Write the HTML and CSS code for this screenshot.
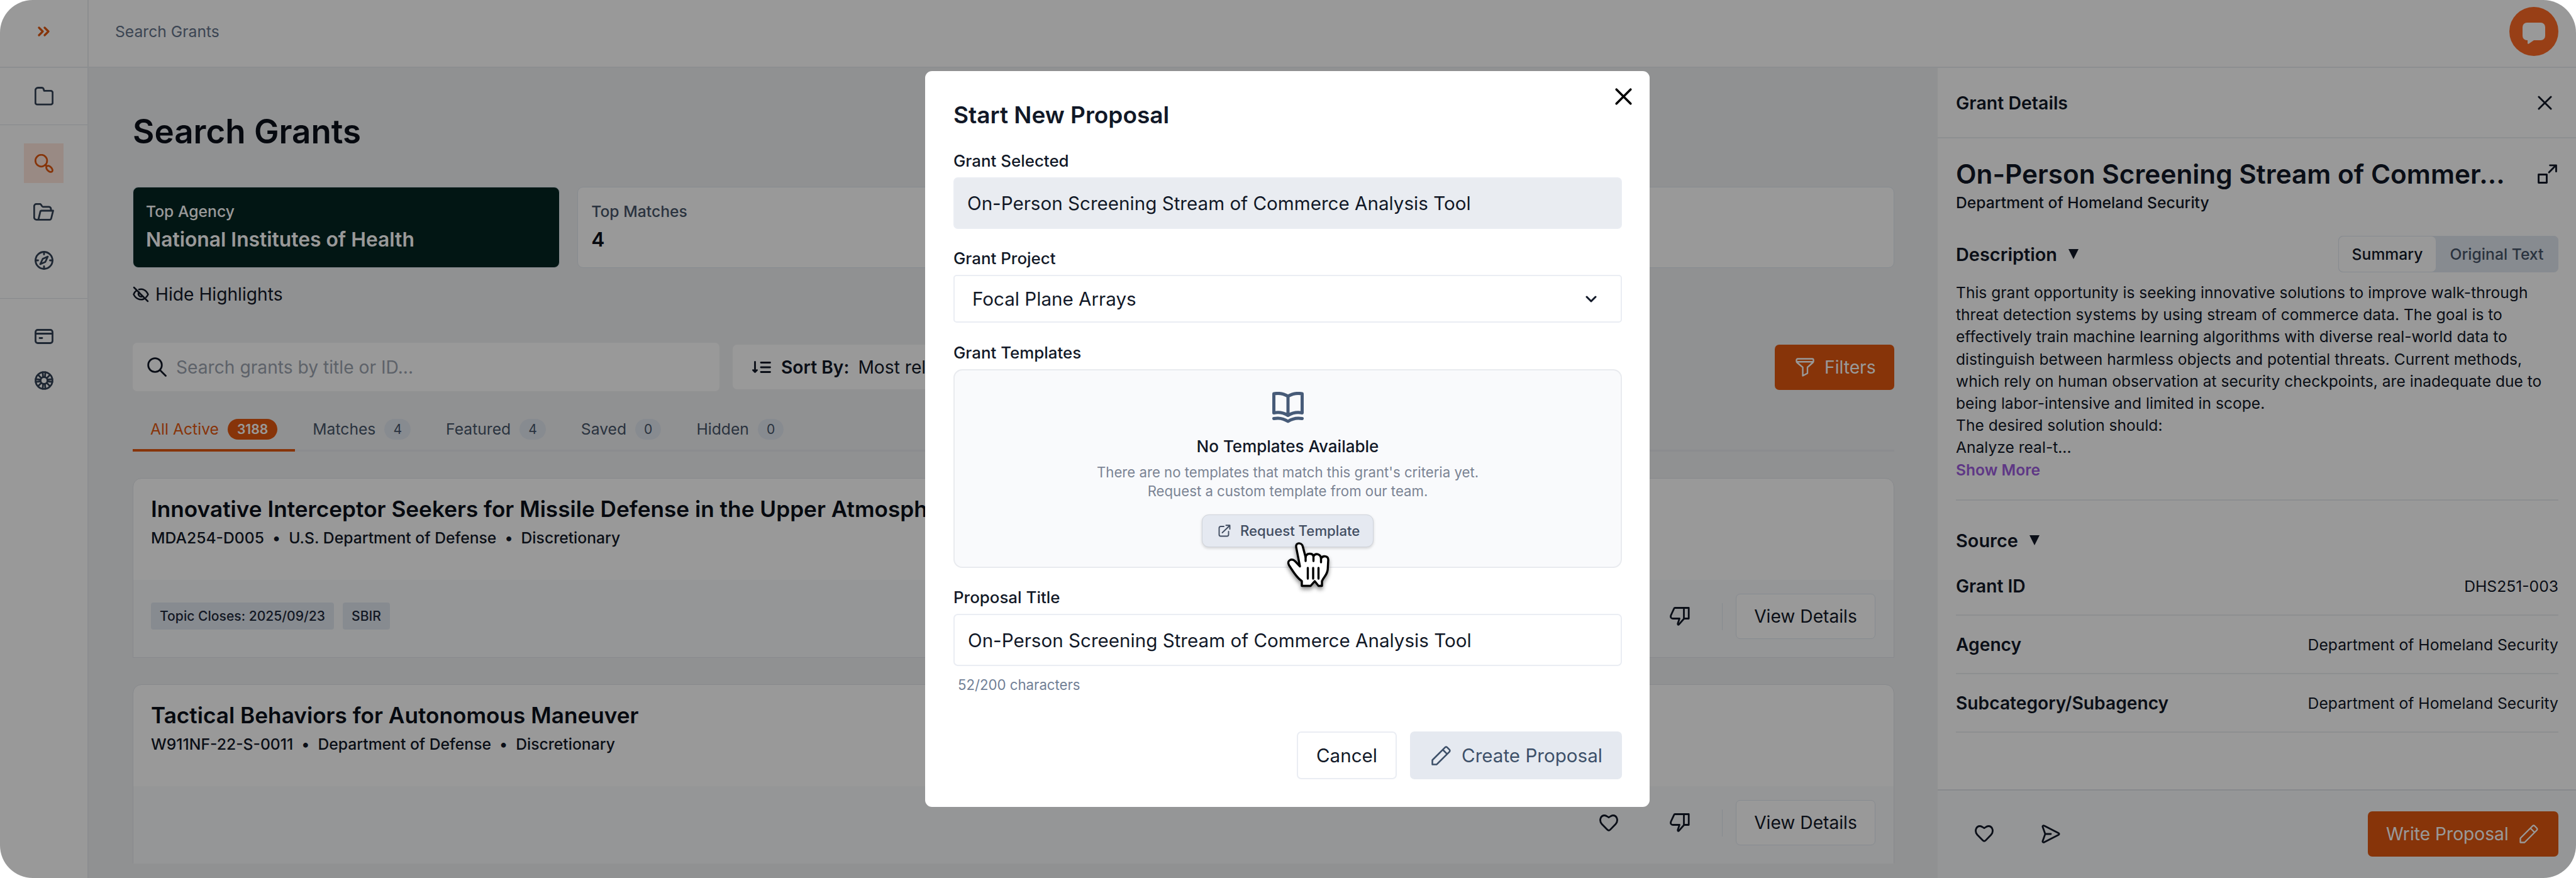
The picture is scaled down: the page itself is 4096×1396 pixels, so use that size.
FILE: index.html
```html
<!DOCTYPE html>
<html lang="en">
<head>
    <meta charset="UTF-8">
    <meta name="viewport" content="width=device-width, initial-scale=1.0">
    <title>Search Grants</title>
    <link rel="stylesheet" href="styles.css">
</head>
<body>

<svg class="sprite" aria-hidden="true">
    <symbol id="i-heart" viewBox="0 0 30 27"><path d="M15 25.3c-1 0-1.700-.5-2.400-1.200L4 15.200C-.6 10 1.600 1.500 8.400 1.500c2.600 0 4.600 2.200 6.600 3.100 2-.9 4-3.100 6.600-3.100 6.800 0 9 8.500 4.400 13.700l-8.600 8.900c-.7.700-1.400 1.200-2.400 1.200z"/></symbol>
    <symbol id="i-thumb" viewBox="0 0 32 30"><path d="M30.200 1.500H8.300c-.8 0-1.200.4-1.500 1.100L1.800 13.500c-.8 3 .4 5 3 5h10.700L12.800 26.500c-.2 2 .8 2.200 2 1.200l8-9.200h7.400zM22.500 1.500v17"/></symbol>
    <symbol id="i-close" viewBox="0 0 24 24"><path d="M2 2l20 20M22 2L2 22"/></symbol>
    <symbol id="i-pencil" viewBox="0 0 30 30"><path d="M1.500 28.500v-6.700L21 2.300c1-1 2.300-1 3.300 0l3.400 3.400c1 1 1 2.300 0 3.300L8.200 28.500zM17.500 5.800l6.700 6.700"/></symbol>
</svg>

<div class="app">
    <aside class="sidebar">
        <div class="sidebar-top">
            <svg class="chevrons" viewBox="0 0 20 16"><path d="M2 2l6 6-6 6M11 2l6 6-6 6"/></svg>
        </div>
        <div class="nav-group nav-projects">
            <a class="nav-item"><svg viewBox="0 0 30 30"><path d="M1.300 5.500A4 4 0 0 1 5.300 1.500h6c1.500 0 2.500.6 3 2l.8 2.800h10.600a3 3 0 0 1 3 3v15.900a3 3 0 0 1-3 3H4.300a3 3 0 0 1-3-3z"/></svg></a>
        </div>
        <div class="nav-group nav-grants">
            <a class="nav-item active"><svg viewBox="0 0 30 30"><circle cx="10.600" cy="10.500" r="9.300"/><ellipse cx="23.500" cy="23.500" rx="6" ry="3.600" transform="rotate(45 23.500 23.500)"/><path d="M17 17l2.500 2.500"/></svg></a>
            <a class="nav-item"><svg class="wide" viewBox="0 0 33 28"><path d="M8 26.300H5a3.700 3.700 0 0 1-3.700-3.700V5A3.700 3.700 0 0 1 5 1.300h5.500c2.500 0 2.500 4.500 4.500 4.500h9.500a3.500 3.500 0 0 1 3.500 3.500v2.700M8 26.300l3-12.500c.3-1.200 1-1.800 2-1.800h18.500l-3 12c-.4 1.600-1.200 2.300-2.500 2.300z"/></svg></a>
            <a class="nav-item"><svg viewBox="0 0 30 30"><circle cx="15" cy="15" r="13.500"/><path d="M15 1.500v4M15 24.500v4M1.500 15h4M24.500 15h4M21 9l-8 3.500L9 21l8-3.500z"/></svg></a>
        </div>
        <div class="nav-group nav-account">
            <a class="nav-item"><svg viewBox="0 0 30 30"><rect x="1.500" y="4.500" width="27" height="21" rx="3.500"/><path d="M1.500 10.500h27M8 17.500h4"/></svg></a>
            <a class="nav-item"><svg viewBox="0 0 30 30"><circle cx="15" cy="15" r="13.400"/><circle cx="15" cy="15" r="5.500"/><path d="M12.800 1.800l.7 7M17.200 1.800l-.7 7M12.800 28.200l.7-7M17.200 28.200l-.7-7M1.800 12.800l7 .7M1.800 17.200l7-.7M28.200 12.800l-7 .7M28.200 17.200l-7-.7M5.500 6l5 5M24.500 6l-5 5M5.500 24l5-5M24.500 24l-5-5"/></svg></a>
        </div>
    </aside>

    <div class="workspace">
        <header class="topbar">
            <span>Search Grants</span>
            <div class="chat-button">
                <svg viewBox="0 0 36 34"><path d="M7 0h22a7 7 0 0 1 7 7v14a7 7 0 0 1-7 7H18l-8 5.500c-1.200.7-2 .2-2-1V28H7a7 7 0 0 1-7-7V7a7 7 0 0 1 7-7z"/></svg>
            </div>
        </header>

        <div class="columns">
            <main class="content">
                <h1>Search Grants</h1>
                <div class="stats">
                    <div class="stat featured"><span>Top Agency</span><strong>National Institutes of Health</strong></div>
                    <div class="stat"><span>Top Matches</span><strong>4</strong></div>
                    <div class="stat"></div>
                    <div class="stat"></div>
                </div>
                <div class="highlights">
                    <svg viewBox="0 0 26 26"><path d="M2 2l22 22M10 5.200c6-1.600 11.500 1.300 14.500 7.800-.8 1.900-1.900 3.500-3.200 4.700M6.500 6.500C4.300 8 2.600 10.200 1.500 13c3.200 7 9.800 9.800 16 7.500M10.300 9.700c-3.300 3.600 1.200 9 5.300 6.200"/></svg>
                    <span>Hide Highlights</span>
                </div>
                <div class="toolbar">
                    <div class="search">
                        <svg viewBox="0 0 31 31"><circle cx="12.500" cy="12.500" r="10.800"/><path d="M20.500 20.500l9 9"/></svg>
                        <span>Search grants by title or ID...</span>
                    </div>
                    <div class="sort">
                        <svg viewBox="0 0 30 20"><path d="M4.500 1.500v16M1.500 14.500l3 3 3-3M14 2.500h14.500M14 10h14.500M14 17.500h14.500"/></svg>
                        <strong>Sort By:</strong><span>Most relevant</span>
                    </div>
                    <div class="filters">
                        <svg viewBox="0 0 30 30"><path d="M1.500 3.500a2 2 0 0 1 2-2h23a2 2 0 0 1 2 2v1.700c0 1-.3 1.700-1 2.300L19 15v9.500L11.500 28.500V15L2.500 7.500c-.7-.6-1-1.300-1-2.300zM2 6.300h26"/></svg>
                        <span>Filters</span>
                    </div>
                </div>
                <nav class="tabs">
                    <div class="tab active">All Active<b>3188</b></div>
                    <div class="tab">Matches<b>4</b></div>
                    <div class="tab">Featured<b>4</b></div>
                    <div class="tab">Saved<b>0</b></div>
                    <div class="tab">Hidden<b>0</b></div>
                </nav>
                <article class="grant">
                    <div class="grant-head">
                        <h2>Innovative Interceptor Seekers for Missile Defense in the Upper Atmosphere</h2>
                        <p><span>MDA254-D005</span><i>•</i><span>U.S. Department of Defense</span><i>•</i><span>Discretionary</span></p>
                    </div>
                    <div class="grant-foot">
                        <span class="tag">Topic Closes: 2025/09/23</span>
                        <span class="tag">SBIR</span>
                        <div class="actions">
                            <svg class="heart"><use href="#i-heart"/></svg>
                            <svg class="thumb"><use href="#i-thumb"/></svg>
                            <span class="separator"></span>
                            <div class="view">View Details</div>
                        </div>
                    </div>
                </article>
                <article class="grant">
                    <div class="grant-head">
                        <h2>Tactical Behaviors for Autonomous Maneuver</h2>
                        <p><span>W911NF-22-S-0011</span><i>•</i><span>Department of Defense</span><i>•</i><span>Discretionary</span></p>
                    </div>
                    <div class="grant-foot">
                        <div class="actions">
                            <svg class="heart"><use href="#i-heart"/></svg>
                            <svg class="thumb"><use href="#i-thumb"/></svg>
                            <span class="separator"></span>
                            <div class="view">View Details</div>
                        </div>
                    </div>
                </article>
            </main>

            <aside class="details">
                <div class="details-head">
                    <span>Grant Details</span>
                    <svg><use href="#i-close"/></svg>
                </div>
                <div class="details-body">
                    <div class="details-title">
                        <h2>On-Person Screening Stream of Commer...</h2>
                        <svg viewBox="0 0 30 30"><path d="M1.500 16h12.500v12.500h-12.500zM17.500 12.500L28 2M19 1.800h9.500v9.500"/></svg>
                    </div>
                    <p class="agency">Department of Homeland Security</p>
                    <div class="section-head description-head">
                        <h3>Description</h3><span class="triangle"></span>
                        <div class="toggle"><span class="on">Summary</span><span>Original Text</span></div>
                    </div>
                    <div class="description">
                        This grant opportunity is seeking innovative solutions to improve walk-through<br>
                        threat detection systems by using stream of commerce data. The goal is to<br>
                        effectively train machine learning algorithms with diverse real-world data to<br>
                        distinguish between harmless objects and potential threats. Current methods,<br>
                        which rely on human observation at security checkpoints, are inadequate due to<br>
                        being labor-intensive and limited in scope.<br>
                        The desired solution should:<br>
                        Analyze real-t...<br>
                        <a>Show More</a>
                    </div>
                    <div class="section-head source-head"><h3>Source</h3><span class="triangle"></span></div>
                    <dl>
                        <div><dt>Grant ID</dt><dd>DHS251-003</dd></div>
                        <div><dt>Agency</dt><dd>Department of Homeland Security</dd></div>
                        <div><dt>Subcategory/Subagency</dt><dd>Department of Homeland Security</dd></div>
                    </dl>
                </div>
                <div class="details-foot">
                    <svg class="heart"><use href="#i-heart"/></svg>
                    <svg class="send" viewBox="0 0 30 30"><path d="M2 3.700c-.5-1.800 1-2.600 2.600-1.700L27 13.400c1.600.9 1.600 2.300 0 3.200L4.600 28c-1.600.9-3.100.1-2.600-1.700L6 15zM6 15h9"/></svg>
                    <div class="write">Write Proposal<svg><use href="#i-pencil"/></svg></div>
                </div>
            </aside>
        </div>
    </div>

    <div class="overlay">
        <div class="modal">
            <svg class="modal-close"><use href="#i-close"/></svg>
            <h2>Start New Proposal</h2>
            <label>Grant Selected</label>
            <div class="field selected">On-Person Screening Stream of Commerce Analysis Tool</div>
            <label>Grant Project</label>
            <div class="field project">
                <span>Focal Plane Arrays</span>
                <svg viewBox="0 0 18 11"><path d="M2 2l7 7 7-7"/></svg>
            </div>
            <label>Grant Templates</label>
            <div class="templates">
                <svg class="book" viewBox="0 0 50 50"><path d="M2.500 3v30.500c8-1.800 15-.5 22.500 4 7.500-4.500 14.500-5.800 22.500-4V3C39.500 1.500 32.500 2.500 25 7 17.500 2.500 10.500 1.500 2.500 3zM25 7v30M2.500 42.500c8-1.500 15-.5 22.500 4.500 7.500-5 14.500-6 22.500-4.500"/></svg>
                <h3>No Templates Available</h3>
                <p>There are no templates that match this grant's criteria yet.<br>Request a custom template from our team.</p>
                <div class="request">
                    <svg viewBox="0 0 20 20"><path d="M9 3H4a2.500 2.500 0 0 0-2.500 2.500V16A2.500 2.500 0 0 0 4 18.500h10a2.500 2.500 0 0 0 2.500-2.500v-5M6.500 13L18.500 1.500M12.500 1.200h6v6"/></svg>
                    <span>Request Template</span>
                </div>
            </div>
            <label>Proposal Title</label>
            <div class="field title-field">On-Person Screening Stream of Commerce Analysis Tool</div>
            <p class="counter">52/200 characters</p>
            <div class="modal-actions">
                <div class="cancel">Cancel</div>
                <div class="create"><svg><use href="#i-pencil"/></svg>Create Proposal</div>
            </div>
        </div>
    </div>

    <svg class="cursor" viewBox="0 0 70 75"><path class="hand" d="M15 8C13.500 0 24 0 25.500 7L30 24c1-7 11-7 12.500-1.500C46 16.500 54 19 54.500 26c3-5.500 11.500-4 11.500 2L65.200 43C64.500 52 59 55 56 62v7.500h-5.500L44.500 62l-6.500 7.500H24V62C14 55 10 46 3.500 36.500-.5 29 8 25 13.500 30.500l7.500 8z"/><path d="M30 24v6M42.500 22.500V30M54.500 26v6M33.500 41v17M42 41v17M50.500 41v17"/></svg>
</div>

</body>
</html>
```
FILE: styles.css
```css
* {
    box-sizing: border-box;
}
body {
    margin: 0;
    background: #ffffff;
    font-family: Inter, "Liberation Sans", sans-serif;
    font-size: 24.7px;
    color: #111827;
}
h1, h2, h3, p, dl, dd {
    margin: 0;
}
svg {
    display: block;
    flex: none;
    fill: none;
    stroke: currentColor;
    stroke-width: 2.8;
    stroke-linecap: round;
    stroke-linejoin: round;
}
.sprite {
    display: none;
}
.app {
    position: relative;
    display: flex;
    width: 4096px;
    height: 1396px;
    overflow: hidden;
    border-radius: 52px;
    background: #ffffff;
}

/* Sidebar */
.sidebar {
    width: 141px;
    border-right: 2px solid #eaedf1;
    color: #334155;
}
.sidebar-top {
    display: flex;
    align-items: center;
    justify-content: center;
    height: 108px;
    padding-bottom: 7px;
    border-bottom: 2px solid #eaedf1;
}
.chevrons {
    width: 20px;
    height: 16px;
    color: #e0570f;
    stroke-width: 3.2;
}
.nav-group {
    display: flex;
    flex-direction: column;
    align-items: center;
}
.nav-projects {
    height: 91px;
    padding-top: 13px;
    border-bottom: 1px solid #e2e5ea;
}
.nav-grants {
    height: 276px;
    padding-top: 29px;
    gap: 14px;
    border-bottom: 1px solid #e2e5ea;
}
.nav-account {
    padding-top: 28px;
    gap: 7px;
}
.nav-item {
    display: flex;
    align-items: center;
    justify-content: center;
    width: 63px;
    height: 63px;
}
.nav-item svg {
    width: 30px;
    height: 30px;
}
.nav-item .wide {
    width: 33px;
    height: 28px;
}
.nav-item.active {
    background: #ffe6dc;
    color: #e0570f;
}

/* Top bar */
.workspace {
    flex: 1;
    display: flex;
    flex-direction: column;
}
.topbar {
    display: flex;
    align-items: center;
    justify-content: space-between;
    height: 108px;
    padding: 0 28px 6px 42px;
    border-bottom: 2px solid #eaedf1;
    color: #64748b;
}
.chat-button {
    display: flex;
    align-items: center;
    justify-content: center;
    width: 78px;
    height: 78px;
    padding-top: 6px;
    border-radius: 50%;
    background: #fe6926;
}
.chat-button svg {
    width: 36px;
    height: 34px;
    fill: #ffffff;
    stroke: none;
}
.columns {
    flex: 1;
    display: flex;
}

/* Search page */
.content {
    flex: 1;
    padding: 69px 69px 0 70px;
    background: #f1f2f4;
}
.content h1 {
    font-size: 52.9px;
    font-weight: 600;
    line-height: 64px;
    color: #0b0f19;
}
.stats {
    display: grid;
    grid-template-columns: repeat(4, 1fr);
    gap: 28px;
    margin-top: 56px;
}
.stat {
    display: flex;
    flex-direction: column;
    height: 129px;
    padding: 23px 21px;
    border: 1px solid #e2e8f0;
    border-radius: 9px;
    background: #ffffff;
    color: #475569;
}
.stat span {
    line-height: 30px;
    font-weight: 500;
}
.stat strong {
    margin-top: 11px;
    font-size: 31.8px;
    font-weight: 600;
    line-height: 38px;
    color: #0b0f19;
}
.stat.featured {
    padding-left: 20px;
}
.stat.featured,
.stat.featured strong {
    background: #042522;
    color: #ffffff;
}
.highlights {
    display: flex;
    align-items: center;
    gap: 10px;
    height: 34px;
    margin-top: 25px;
    font-size: 28.2px;
}
.highlights svg {
    width: 26px;
    height: 26px;
    stroke-width: 2.5;
}
.toolbar {
    display: flex;
    align-items: center;
    height: 77px;
    margin-top: 60px;
    font-size: 28.2px;
}
.search,
.sort,
.filters {
    display: flex;
    align-items: center;
    background: #ffffff;
    border-radius: 7px;
}
.search {
    width: 933px;
    height: 77px;
    padding-left: 23px;
    gap: 15px;
    color: #9ca3af;
}
.search svg {
    width: 31px;
    height: 31px;
    color: #111827;
}
.sort {
    width: 560px;
    height: 71px;
    margin-left: 21px;
    padding-left: 31px;
}
.sort svg {
    width: 30px;
    height: 20px;
    margin-right: 16px;
}
.sort strong {
    margin-right: 14px;
    font-weight: 600;
}
.filters {
    width: 190px;
    height: 72px;
    margin-left: auto;
    padding-left: 33px;
    gap: 16px;
    background: #e1570f;
    color: #ffffff;
}
.filters svg {
    width: 30px;
    height: 30px;
    stroke-width: 2.4;
}
.tabs {
    display: flex;
    height: 71px;
    margin-top: 25px;
    box-shadow: inset 0 -3px #e8eaee;
    color: #475569;
}
.tab {
    display: flex;
    align-items: center;
    gap: 14px;
    padding: 3px 28px 0;
    border-bottom: 4px solid transparent;
}
.tab b {
    height: 33px;
    padding: 0 14px;
    border-radius: 17px;
    background: #e2e8f0;
    font-size: 21.1px;
    font-weight: 400;
    line-height: 33px;
}
.tab.active {
    border-color: #e1570f;
    color: #e1570f;
}
.tab.active b {
    padding: 0 15px;
    background: #e1570f;
    color: #ffffff;
    font-weight: 600;
}
.grant {
    height: 286px;
    margin-top: 42px;
    border: 1px solid #e2e5ea;
    border-radius: 14px 14px 0 0;
    background: #ffffff;
}
.grant + .grant {
    height: 285px;
}
.grant-head {
    height: 161px;
    padding: 27px 28px 0;
}
.grant h2 {
    overflow: hidden;
    font-size: 35.2px;
    font-weight: 600;
    line-height: 42px;
    white-space: nowrap;
    color: #0b0f19;
}
.grant p {
    display: flex;
    gap: 13px;
    margin-top: 9px;
    font-weight: 500;
    line-height: 32px;
}
.grant i {
    font-style: normal;
}
.grant-foot {
    display: flex;
    height: 123px;
    padding: 36px 29px 0 28px;
    gap: 14px;
    background: #f8fafc;
}
.tag {
    height: 43px;
    padding: 0 14px;
    border-radius: 4px;
    background: #e2e8f0;
    font-size: 21.1px;
    font-weight: 500;
    line-height: 43px;
    color: #1e293b;
}
.actions {
    display: flex;
    align-items: center;
    height: 72px;
    margin: -14px 0 0 auto;
}
.heart {
    width: 30px;
    height: 27px;
}
.thumb {
    width: 32px;
    height: 30px;
    margin-left: 82px;
}
.separator {
    width: 1px;
    height: 43px;
    margin: 0 21px 0 51px;
    background: #e2e8f0;
}
.view {
    width: 222px;
    height: 72px;
    border: 1px solid #e2e8f0;
    border-radius: 7px;
    background: #ffffff;
    font-size: 28.2px;
    line-height: 70px;
    text-align: center;
}

/* Grant details */
.details {
    display: flex;
    flex-direction: column;
    width: 1015px;
}
.details-head {
    display: flex;
    align-items: center;
    justify-content: space-between;
    height: 112px;
    padding: 1px 38px 0 29px;
    border-bottom: 2px solid #eceef1;
    font-size: 28.5px;
    font-weight: 600;
}
.details-head svg {
    width: 23px;
    height: 23px;
    stroke-width: 3;
}
.details-body {
    flex: 1;
    padding: 30px 28px 0 29px;
}
.details-title {
    display: flex;
    align-items: center;
    justify-content: space-between;
    height: 52px;
    padding-right: 2px;
}
.details-title h2 {
    font-size: 42.3px;
    font-weight: 600;
}
.details-title svg {
    width: 31px;
    height: 31px;
}
.agency {
    margin-top: 4px;
    font-weight: 500;
    line-height: 32px;
}
.section-head {
    display: flex;
    align-items: center;
}
.section-head h3 {
    font-size: 28.9px;
    font-weight: 600;
}
.triangle {
    margin-left: 18px;
    border: 8.5px solid transparent;
    border-top: 16px solid #111827;
    border-bottom: 0;
}
.description-head {
    height: 58px;
    margin-top: 37px;
}
.toggle {
    display: flex;
    width: 350px;
    height: 58px;
    margin-left: auto;
    border: 1px solid #e2e8f0;
    border-radius: 7px;
    background: #e2e8f0;
    font-weight: 500;
    line-height: 56px;
    text-align: center;
    color: #475569;
}
.toggle span {
    flex: 1;
}
.toggle .on {
    flex: 0 0 154px;
    border-radius: 7px;
    background: #ffffff;
    color: #111827;
}
.description {
    height: 348px;
    margin-top: 15px;
    font-size: 24.6px;
    line-height: 35.2px;
    white-space: nowrap;
    border-bottom: 2px solid #eaedf1;
}
.description a {
    font-weight: 600;
    color: #9d5cde;
}
.source-head {
    height: 36px;
    margin-top: 45px;
}
.details dl > div {
    display: flex;
    align-items: center;
    justify-content: space-between;
    height: 93px;
    border-bottom: 2px solid #eceef1;
}
.details dl > div:first-child {
    height: 102px;
    padding-top: 9px;
}
.details dt {
    font-size: 28.2px;
    font-weight: 600;
}
.details-foot {
    display: flex;
    align-items: center;
    height: 141px;
    padding: 0 28px 2px 59px;
    border-top: 2px solid #e2e5ea;
    background: #f8fafc;
}
.send {
    width: 30px;
    height: 30px;
    margin-left: 76px;
}
.write {
    display: flex;
    align-items: center;
    justify-content: space-between;
    width: 303px;
    height: 72px;
    margin-left: auto;
    padding: 0 32px 0 29px;
    border-radius: 7px;
    background: #e1570f;
    color: #ffffff;
    font-size: 28.2px;
}
.write svg {
    width: 30px;
    height: 30px;
    stroke-width: 2.3;
}

/* Proposal dialog */
.overlay {
    position: absolute;
    inset: 0;
    display: flex;
    justify-content: center;
    align-items: center;
    background: rgba(0, 0, 0, 0.4);
}
.modal {
    position: relative;
    width: 1152px;
    height: 1170px;
    padding: 45px 44px 0 45px;
    margin-right: 2px;
    border-radius: 11px;
    background: #ffffff;
}
.modal-close {
    position: absolute;
    top: 27px;
    right: 28px;
    width: 27px;
    height: 27px;
    color: #000000;
    stroke-width: 3.2;
}
.modal h2 {
    font-size: 37px;
    font-weight: 600;
    line-height: 50px;
}
.modal label {
    display: block;
    height: 52px;
    font-size: 25.9px;
    font-weight: 500;
    line-height: 44px;
}
.modal h2 + label {
    margin-top: 26px;
    height: 48px;
}
.field {
    display: flex;
    align-items: center;
    border: 2px solid #eaedf3;
    border-radius: 7px;
    font-size: 29.6px;
}
.selected {
    height: 82px;
    margin-bottom: 25px;
    padding: 0 20px;
    background: #e9ecf1;
}
.project {
    justify-content: space-between;
    height: 76px;
    margin: -4px 0 26px;
    padding: 0 38px 0 28px;
    border-radius: 5px;
}
.project svg {
    width: 18px;
    height: 11px;
    stroke-width: 3;
}
.templates {
    display: flex;
    flex-direction: column;
    align-items: center;
    height: 316px;
    margin: -4px 0 25px;
    padding-top: 34px;
    border: 2px solid #e9ebef;
    border-radius: 14px;
    background: #f9fafc;
}
.book {
    width: 50px;
    height: 50px;
    color: #475b78;
    stroke-width: 5;
}
.templates h3 {
    margin-top: 20px;
    font-size: 26px;
    font-weight: 500;
    line-height: 34px;
}
.templates p {
    margin-top: 9px;
    font-size: 22.2px;
    line-height: 30.3px;
    text-align: center;
    color: #7b8494;
}
.request {
    display: flex;
    align-items: center;
    width: 273px;
    height: 52px;
    margin-top: 21px;
    padding-left: 25px;
    gap: 15px;
    border: 1px solid #d0d4db;
    border-radius: 11px;
    background: #e5e9f1;
    box-shadow: 0 2px 4px rgba(0, 0, 0, 0.16);
    font-size: 22.2px;
    font-weight: 500;
    color: #414d61;
}
.request svg {
    width: 20px;
    height: 20px;
    stroke-width: 1.9;
}
.title-field {
    height: 83px;
    margin-top: -4px;
    padding: 0 21px;
}
.counter {
    margin: 15px 0 0 7px;
    font-size: 22.2px;
    line-height: 30px;
    color: #718096;
}
.modal-actions {
    display: flex;
    justify-content: flex-end;
    gap: 21px;
    margin-top: 59px;
    font-size: 29.6px;
}
.cancel,
.create {
    display: flex;
    align-items: center;
    justify-content: center;
    height: 76px;
    border-radius: 7px;
}
.cancel {
    width: 159px;
    border: 2px solid #eaedf3;
}
.create {
    width: 337px;
    gap: 17px;
    padding-left: 3px;
    background: #e5e9f0;
    color: #3d5069;
}
.create svg {
    width: 31px;
    height: 31px;
    stroke-width: 2.5;
}
.cursor {
    position: absolute;
    left: 2046px;
    top: 862px;
    width: 70px;
    height: 75px;
    overflow: visible;
    color: #000000;
    stroke-width: 3.4;
    filter: drop-shadow(0 4px 3px rgba(0, 0, 0, 0.45));
}
.cursor .hand {
    fill: #ffffff;
}
```
